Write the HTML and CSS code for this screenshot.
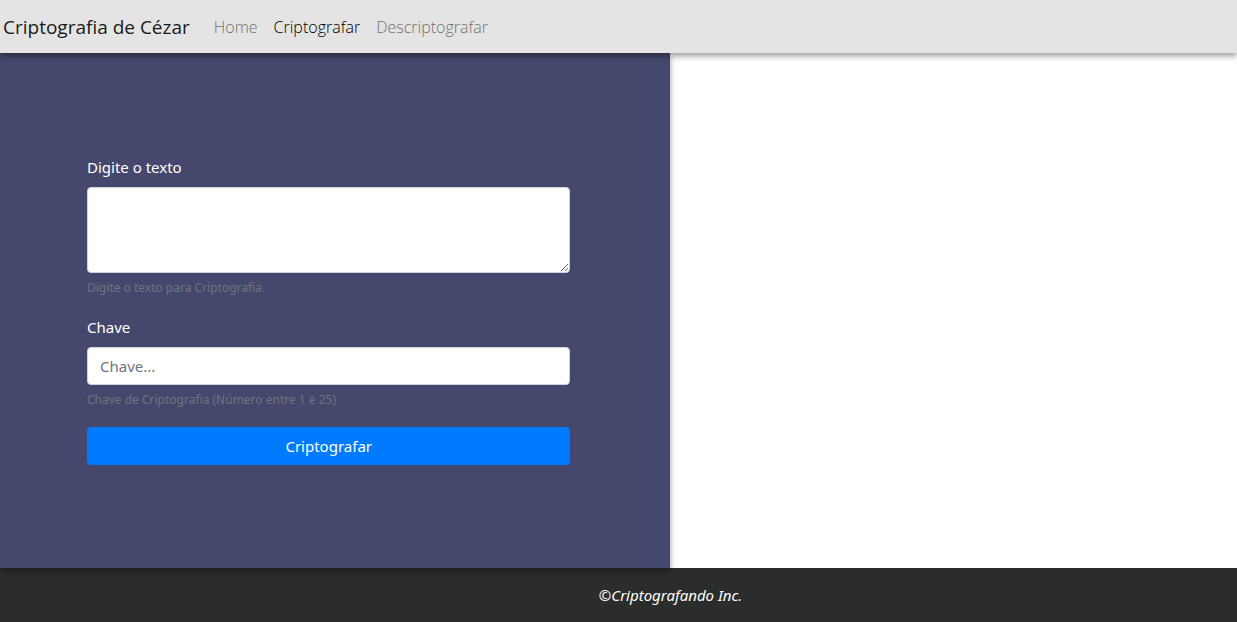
FILE: index.html
```html
<!DOCTYPE html>
<html lang="pt-BR">
<head>
<meta charset="utf-8">
<title>Criptografia de Cézar</title>
<link rel="stylesheet" href="styles.css">
</head>
<body>
<nav class="navbar">
  <a class="brand" href="#">Criptografia de Cézar</a>
  <a class="nav-link" href="#">Home</a>
  <a class="nav-link active" href="#">Criptografar</a>
  <a class="nav-link" href="#">Descriptografar</a>
</nav>
<main class="main">
  <section class="panel">
    <form class="form">
      <div class="group">
        <label for="texto">Digite o texto</label>
        <textarea class="control area" id="texto"></textarea>
        <small class="help">Digite o texto para Criptografia.</small>
      </div>
      <div class="group">
        <label for="chave">Chave</label>
        <input class="control" id="chave" type="text" placeholder="Chave...">
        <small class="help">Chave de Criptografia (Número entre 1 e 25)</small>
      </div>
      <button class="submit" type="button">Criptografar</button>
    </form>
  </section>
</main>
<footer class="footer">©Criptografando Inc.</footer>
</body>
</html>
```
FILE: styles.css
```css
* { box-sizing: border-box; }
body {
  margin: 0;
  min-height: 100vh;
  display: flex;
  flex-direction: column;
  background: #fff;
  font: 16px/24px "Segoe UI", "Noto Sans", "Open Sans", sans-serif;
}
.navbar {
  position: relative;
  z-index: 2;
  display: flex;
  align-items: center;
  padding: 7px 3px 6px;
  background: #e4e4e4;
  box-shadow: 0 3px 6px rgba(0, 0, 0, .4);
  font-family: "Segoe UI", "Open Sans", sans-serif;
}
.brand, .nav-link { text-decoration: none; }
.brand {
  margin-right: 16px;
  font-size: 19px;
  line-height: 30px;
  color: #1a1a1a;
}
.nav-link {
  padding: 8px;
  font-size: 16px;
  font-weight: 300;
  color: #727272;
}
.nav-link.active { color: #000; }
.main { flex: 1; display: flex; }
.panel {
  position: relative;
  z-index: 1;
  width: 54.2%;
  display: flex;
  flex-direction: column;
  justify-content: center;
  padding: 0 100px 2px 87px;
  background: #45486c;
  box-shadow: 0 3px 6px rgba(0, 0, 0, .4);
}
.form { display: flex; flex-direction: column; gap: 16px; }
.group { display: flex; flex-direction: column; }
label { margin-bottom: 8px; font-size: 15px; color: #fff; }
.control {
  width: 100%;
  height: 38px;
  padding: 6px 12px;
  border: 1px solid #ced4da;
  border-radius: 4px;
  background: #fff;
  color: #495057;
  font: inherit;
  font-size: 15px;
}
.control::placeholder { color: #6c757d; opacity: 1; }
.area { height: 86px; resize: vertical; }
.help { margin-top: 4px; font-size: 12px; line-height: 22px; color: #6c757d; }
.submit {
  height: 38px;
  border: 0;
  border-radius: 4px;
  background: #007bff;
  color: #fff;
  font: inherit;
  font-size: 15px;
}
.footer {
  padding: 15px 0 15px 104px;
  background: #2b2d2c;
  color: #fff;
  font-size: 15px;
  font-style: italic;
  text-align: center;
}
```
